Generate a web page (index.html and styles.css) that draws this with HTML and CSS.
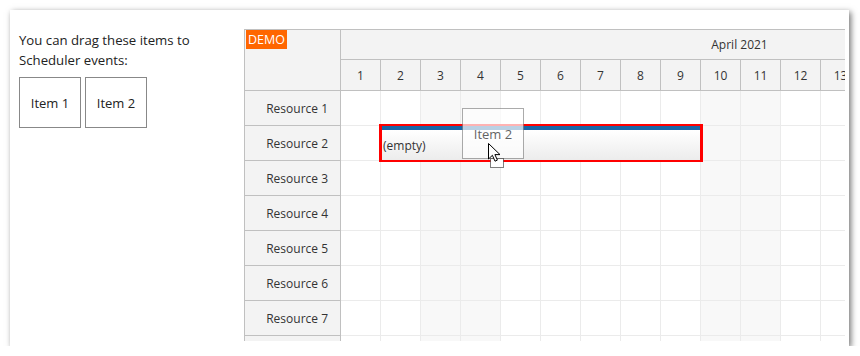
FILE: index.html
```html
<!DOCTYPE html>
<html lang="en">
<head>
<meta charset="utf-8">
<title>Scheduler drag and drop</title>
<link rel="stylesheet" href="styles.css">
</head>
<body>
<div class="frame">
  <div class="sidebar">
    <p class="hint">You can drag these items to<br>Scheduler events:</p>
    <div class="items">
      <div class="item">Item 1</div>
      <div class="item">Item 2</div>
    </div>
  </div>
  <div class="scheduler">
    <div class="corner"><span class="demo">DEMO</span></div>
    <div class="timeheader">
      <div class="month"><span class="month-text">April 2021</span></div>
      <div class="days">
        <div class="day">1</div><div class="day">2</div><div class="day">3</div><div class="day">4</div>
        <div class="day">5</div><div class="day">6</div><div class="day">7</div><div class="day">8</div>
        <div class="day">9</div><div class="day">10</div><div class="day">11</div><div class="day">12</div>
        <div class="day">13</div>
      </div>
    </div>
    <div class="rowheaders">
      <div class="rh">Resource 1</div>
      <div class="rh">Resource 2</div>
      <div class="rh">Resource 3</div>
      <div class="rh">Resource 4</div>
      <div class="rh">Resource 5</div>
      <div class="rh">Resource 6</div>
      <div class="rh">Resource 7</div>
      <div class="rh"></div>
    </div>
    <div class="grid">
      <div class="row"><div class="cell"></div><div class="cell"></div><div class="cell we"></div><div class="cell we"></div><div class="cell"></div><div class="cell"></div><div class="cell"></div><div class="cell"></div><div class="cell"></div><div class="cell we"></div><div class="cell we"></div><div class="cell"></div><div class="cell"></div></div>
      <div class="row"><div class="cell"></div><div class="cell"></div><div class="cell we"></div><div class="cell we"></div><div class="cell"></div><div class="cell"></div><div class="cell"></div><div class="cell"></div><div class="cell"></div><div class="cell we"></div><div class="cell we"></div><div class="cell"></div><div class="cell"></div></div>
      <div class="row"><div class="cell"></div><div class="cell"></div><div class="cell we"></div><div class="cell we"></div><div class="cell"></div><div class="cell"></div><div class="cell"></div><div class="cell"></div><div class="cell"></div><div class="cell we"></div><div class="cell we"></div><div class="cell"></div><div class="cell"></div></div>
      <div class="row"><div class="cell"></div><div class="cell"></div><div class="cell we"></div><div class="cell we"></div><div class="cell"></div><div class="cell"></div><div class="cell"></div><div class="cell"></div><div class="cell"></div><div class="cell we"></div><div class="cell we"></div><div class="cell"></div><div class="cell"></div></div>
      <div class="row"><div class="cell"></div><div class="cell"></div><div class="cell we"></div><div class="cell we"></div><div class="cell"></div><div class="cell"></div><div class="cell"></div><div class="cell"></div><div class="cell"></div><div class="cell we"></div><div class="cell we"></div><div class="cell"></div><div class="cell"></div></div>
      <div class="row"><div class="cell"></div><div class="cell"></div><div class="cell we"></div><div class="cell we"></div><div class="cell"></div><div class="cell"></div><div class="cell"></div><div class="cell"></div><div class="cell"></div><div class="cell we"></div><div class="cell we"></div><div class="cell"></div><div class="cell"></div></div>
      <div class="row"><div class="cell"></div><div class="cell"></div><div class="cell we"></div><div class="cell we"></div><div class="cell"></div><div class="cell"></div><div class="cell"></div><div class="cell"></div><div class="cell"></div><div class="cell we"></div><div class="cell we"></div><div class="cell"></div><div class="cell"></div></div>
      <div class="row"><div class="cell"></div><div class="cell"></div><div class="cell we"></div><div class="cell we"></div><div class="cell"></div><div class="cell"></div><div class="cell"></div><div class="cell"></div><div class="cell"></div><div class="cell we"></div><div class="cell we"></div><div class="cell"></div><div class="cell"></div></div>

      <div class="event">
        <div class="event-bar"></div>
        <div class="event-body">(empty)</div>
      </div>
      <div class="drag-shadow">Item 2</div>
      <svg class="cursor" width="20" height="26" viewBox="0 0 20 26">
        <rect x="2.5" y="15.5" width="13" height="9" fill="#fff" stroke="#000" stroke-dasharray="1 1"/>
        <path d="M0.5 0.5 V16 L4.4 12.3 L7 18.2 L9.4 17.1 L6.9 11.6 H12 Z" fill="#fff" stroke="#000" stroke-linejoin="miter"/>
      </svg>
    </div>
  </div>
</div>
</body>
</html>
```

FILE: styles.css
```css
* {
  box-sizing: border-box;
}

body {
  margin: 0;
  background: #fff;
  font-family: "Open Sans", "Noto Sans", sans-serif;
  color: #333;
}

.frame {
  margin: 10px 0 0 10px;
  width: 839px;
  height: 336px;
  background: #fff;
  box-shadow: 2px 2px 6px rgba(0, 0, 0, 0.55);
  display: flex;
  padding: 19px 0 0 9px;
  overflow: hidden;
}

.sidebar {
  width: 225px;
  flex: none;
}

.hint {
  margin: 0;
  padding-top: 1px;
  font-size: 13.2px;
  line-height: 20px;
  color: #222;
}

.items {
  display: flex;
  gap: 4px;
  margin-top: 7px;
}

.item {
  width: 62px;
  height: 51px;
  border: 1px solid #888;
  display: flex;
  align-items: center;
  justify-content: center;
  font-size: 13px;
  color: #222;
  background: #fff;
}

.scheduler {
  width: 601px;
  height: 312px;
  flex: none;
  border-left: 1px solid #c0c0c0;
  border-top: 1px solid #c0c0c0;
  overflow: hidden;
  display: grid;
  grid-template-columns: 96px 520px;
  grid-template-rows: 61px auto;
  font-size: 12px;
  color: #333;
  background: #fff;
}

.corner {
  background: #f3f3f3;
  border-right: 1px solid #c0c0c0;
  border-bottom: 1px solid #c0c0c0;
  padding-left: 1px;
}

.demo {
  display: inline-block;
  background: #ff6600;
  color: #fff;
  font-size: 12.5px;
  line-height: 19px;
  padding: 0 2px;
}

.timeheader {
  background: #f3f3f3;
}

.month {
  height: 30px;
  border-bottom: 1px solid #c0c0c0;
  display: flex;
  align-items: center;
  overflow: hidden;
}

.month-text {
  flex: none;
  width: 797px;
  text-align: center;
  white-space: nowrap;
}

.days {
  display: flex;
  height: 31px;
  border-bottom: 1px solid #c0c0c0;
}

.day {
  width: 40px;
  flex: none;
  border-right: 1px solid #c0c0c0;
  display: flex;
  align-items: center;
  justify-content: center;
}

.rh {
  height: 35px;
  background: #f3f3f3;
  border-right: 1px solid #c0c0c0;
  border-bottom: 1px solid #c0c0c0;
  display: flex;
  align-items: center;
  justify-content: flex-end;
  padding-right: 12px;
}

.grid {
  position: relative;
}

.row {
  display: flex;
  height: 35px;
}

.cell {
  width: 40px;
  flex: none;
  border-right: 1px solid #ebebeb;
  border-bottom: 1px solid #ebebeb;
}

.cell.we {
  background: #f8f8f8;
}

.event {
  position: absolute;
  left: 38px;
  top: 33px;
  width: 324px;
  height: 38px;
  border-style: solid;
  border-color: #ff0000;
  border-width: 2px 3px;
}

.event-bar {
  height: 4px;
  background: #1a66a6;
}

.event-body {
  height: 30px;
  background: linear-gradient(#ffffff, #ececec);
  display: flex;
  align-items: center;
  padding-left: 1px;
}

.drag-shadow {
  position: absolute;
  left: 121px;
  top: 17px;
  width: 62px;
  height: 51px;
  border: 1px solid #888;
  background: #fff;
  opacity: 0.7;
  display: flex;
  align-items: center;
  justify-content: center;
  font-size: 13px;
  color: #222;
}

.cursor {
  position: absolute;
  left: 147px;
  top: 52px;
}
```
